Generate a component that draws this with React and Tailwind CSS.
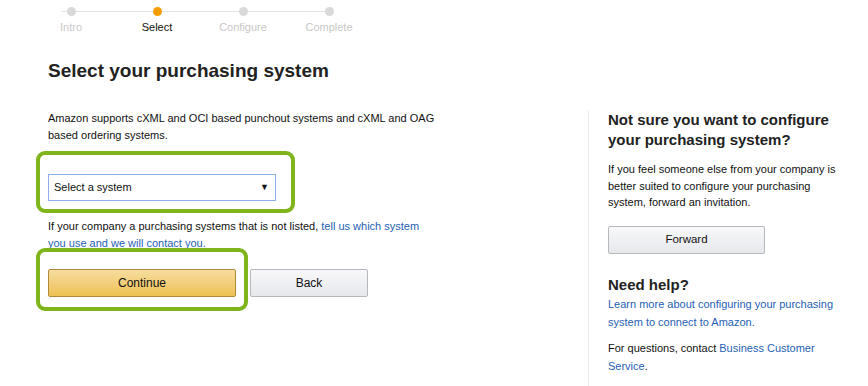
const steps = [
  { label: 'Intro', active: false },
  { label: 'Select', active: true },
  { label: 'Configure', active: false },
  { label: 'Complete', active: false },
];

function Stepper() {
  return (
    <div className="relative ml-[28px] flex w-[344px] pt-[7px]">
      <div className="absolute left-[34px] top-[11px] h-px w-[268px] bg-[#e3e3e3]" />
      {steps.map((s) => (
        <div key={s.label} className="relative flex w-[86px] flex-col items-center">
          <div className={`h-[9px] w-[9px] rounded-full ${s.active ? 'bg-[#f59c00]' : 'bg-[#d9d9d9]'}`} />
          <div className={`mt-[4px] text-[11px] leading-[14px] ${s.active ? 'text-[#111]' : 'text-[#c8c8c8]'}`}>{s.label}</div>
        </div>
      ))}
    </div>
  );
}

export default function App() {
  return (
    <div className="h-[386px] w-[868px] overflow-hidden bg-white font-['Liberation_Sans',Arial,sans-serif] text-[#111]">
      <Stepper />
      <h1 className="ml-[48px] mt-[26px] text-[19px] font-bold leading-[22px] text-[#222]">Select your purchasing system</h1>
      <div className="mt-[18px] flex">
        <div className="w-[540px] shrink-0 pl-[48px] pt-[10px]">
          <p className="w-[400px] text-[11px] leading-[17px] text-[#111]">
            Amazon supports cXML and OCI based punchout systems and cXML and OAG based ordering systems.
          </p>
          <div className="-ml-[12px] mt-[7px] w-[259px] rounded-[9px] border-4 border-[#7fb41d] px-[8px] pb-[8px] pt-[19px]">
            <div className="flex h-[27px] w-[228px] items-center justify-between border border-[#8fb0e6] bg-white pl-[5px] pr-[6px] text-[11px] text-[#111]">
              <span>Select a system</span>
              <span className="text-[9px]">▼</span>
            </div>
          </div>
          <p className="mt-[5px] w-[380px] text-[11px] leading-[17px] text-[#111]">
            If your company a purchasing systems that is not listed,{' '}
            <a className="text-[#1f5fb4]">tell us which system you use and we will contact you.</a>
          </p>
          <div className="-mt-[4px] flex items-start">
            <div className="-ml-[12px] w-[212px] rounded-[9px] border-4 border-[#7fb41d] px-[8px] pb-[10px] pt-[17px]">
              <button className="flex h-[28px] w-[188px] items-center justify-center rounded-[2px] border border-[#b08a3a] bg-gradient-to-b from-[#f6dc9e] to-[#efc152] text-[12px] text-[#111]">
                Continue
              </button>
            </div>
            <button className="ml-[2px] mt-[21px] flex h-[28px] w-[118px] items-center justify-center rounded-[2px] border border-[#b5b8bd] bg-gradient-to-b from-[#f8f8fa] to-[#e6e8ec] text-[12px] text-[#111]">
              Back
            </button>
          </div>
        </div>
        <div className="ml-[48px] mt-[10px] flex-1 border-l border-[#ececec] pb-[40px] pl-[19px]">
          <h2 className="w-[232px] text-[15px] font-bold leading-[20px] text-[#222]">
            Not sure you want to configure your purchasing system?
          </h2>
          <p className="mt-[11px] w-[240px] text-[11px] leading-[16.5px] text-[#111]">
            If you feel someone else from your company is better suited to configure your purchasing system, forward an invitation.
          </p>
          <button className="mt-[15px] flex h-[28px] w-[157px] items-center justify-center rounded-[2px] border border-[#b5b8bd] bg-gradient-to-b from-[#f8f8fa] to-[#e6e8ec] text-[11.5px] text-[#111]">
            Forward
          </button>
          <h2 className="mt-[21px] text-[15px] font-bold leading-[20px] text-[#222]">Need help?</h2>
          <p className="w-[240px] text-[11px] leading-[18px] text-[#1f5fb4]">
            Learn more about configuring your purchasing system to connect to Amazon.
          </p>
          <p className="mt-[8px] w-[240px] text-[11px] leading-[18px] text-[#111]">
            For questions, contact <a className="text-[#1f5fb4]">Business Customer Service</a>.
          </p>
        </div>
      </div>
    </div>
  );
}
